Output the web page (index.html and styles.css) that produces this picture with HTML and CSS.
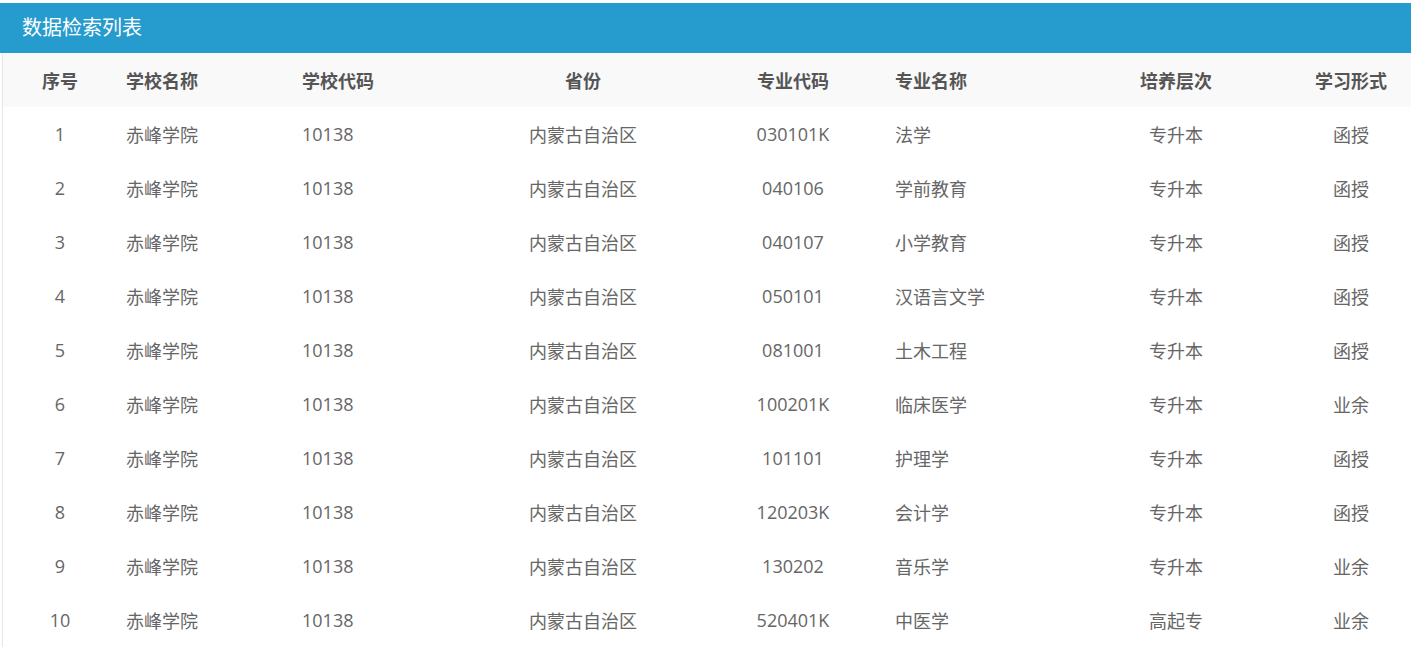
FILE: index.html
```html
<!DOCTYPE html>
<html lang="zh-CN">
<head>
<meta charset="utf-8">
<title>数据检索列表</title>
<link rel="stylesheet" href="styles.css">
</head>
<body>
<div class="panel">
  <div class="panel-title">数据检索列表</div>
  <div class="table">
    <div class="row head">
      <div class="c c1">序号</div><div class="c c2">学校名称</div><div class="c c3">学校代码</div><div class="c c4">省份</div><div class="c c5">专业代码</div><div class="c c6">专业名称</div><div class="c c7">培养层次</div><div class="c c8">学习形式</div>
    </div>
    <div class="row"><div class="c c1">1</div><div class="c c2">赤峰学院</div><div class="c c3">10138</div><div class="c c4">内蒙古自治区</div><div class="c c5">030101K</div><div class="c c6">法学</div><div class="c c7">专升本</div><div class="c c8">函授</div></div>
    <div class="row"><div class="c c1">2</div><div class="c c2">赤峰学院</div><div class="c c3">10138</div><div class="c c4">内蒙古自治区</div><div class="c c5">040106</div><div class="c c6">学前教育</div><div class="c c7">专升本</div><div class="c c8">函授</div></div>
    <div class="row"><div class="c c1">3</div><div class="c c2">赤峰学院</div><div class="c c3">10138</div><div class="c c4">内蒙古自治区</div><div class="c c5">040107</div><div class="c c6">小学教育</div><div class="c c7">专升本</div><div class="c c8">函授</div></div>
    <div class="row"><div class="c c1">4</div><div class="c c2">赤峰学院</div><div class="c c3">10138</div><div class="c c4">内蒙古自治区</div><div class="c c5">050101</div><div class="c c6">汉语言文学</div><div class="c c7">专升本</div><div class="c c8">函授</div></div>
    <div class="row"><div class="c c1">5</div><div class="c c2">赤峰学院</div><div class="c c3">10138</div><div class="c c4">内蒙古自治区</div><div class="c c5">081001</div><div class="c c6">土木工程</div><div class="c c7">专升本</div><div class="c c8">函授</div></div>
    <div class="row"><div class="c c1">6</div><div class="c c2">赤峰学院</div><div class="c c3">10138</div><div class="c c4">内蒙古自治区</div><div class="c c5">100201K</div><div class="c c6">临床医学</div><div class="c c7">专升本</div><div class="c c8">业余</div></div>
    <div class="row"><div class="c c1">7</div><div class="c c2">赤峰学院</div><div class="c c3">10138</div><div class="c c4">内蒙古自治区</div><div class="c c5">101101</div><div class="c c6">护理学</div><div class="c c7">专升本</div><div class="c c8">函授</div></div>
    <div class="row"><div class="c c1">8</div><div class="c c2">赤峰学院</div><div class="c c3">10138</div><div class="c c4">内蒙古自治区</div><div class="c c5">120203K</div><div class="c c6">会计学</div><div class="c c7">专升本</div><div class="c c8">函授</div></div>
    <div class="row"><div class="c c1">9</div><div class="c c2">赤峰学院</div><div class="c c3">10138</div><div class="c c4">内蒙古自治区</div><div class="c c5">130202</div><div class="c c6">音乐学</div><div class="c c7">专升本</div><div class="c c8">业余</div></div>
    <div class="row"><div class="c c1">10</div><div class="c c2">赤峰学院</div><div class="c c3">10138</div><div class="c c4">内蒙古自治区</div><div class="c c5">520401K</div><div class="c c6">中医学</div><div class="c c7">高起专</div><div class="c c8">业余</div></div>
  </div>
</div>
</body>
</html>
```

FILE: styles.css
```css
html, body {
  margin: 0;
  padding: 0;
  background: #ffffff;
  overflow: hidden;
}
body {
  font-family: "Open Sans", "Noto Sans CJK SC", sans-serif;
  color: #666666;
}
.panel {
  padding-top: 3px;
}
.panel-title {
  height: 50px;
  background: #269bcd;
  color: #ffffff;
  font-size: 20px;
  line-height: 50px;
  padding-left: 22px;
}
.table {
  margin-left: 2px;
  border-left: 1px solid #e6e6e6;
}
.row {
  display: grid;
  grid-template-columns: 114px 176px 173px 234px 186px 180px 220px 125px;
  height: 54px;
  align-items: center;
  font-size: 18px;
}
.row.head {
  background: #f9f9f9;
  font-weight: bold;
  color: #555555;
}
.c {
  white-space: nowrap;
}
.c1, .c4, .c5, .c7, .c8 {
  text-align: center;
}
.c2, .c3, .c6 {
  padding-left: 9px;
}
.c8 {
  padding-left: 5px;
}
```
